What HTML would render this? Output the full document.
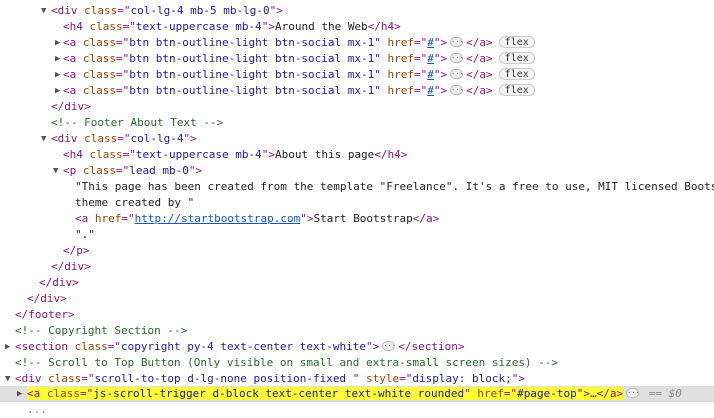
<!DOCTYPE html>
<html><head><style>
html,body{margin:0;padding:0;background:#fff;width:714px;height:405px;overflow:hidden}
body{font-family:"DejaVu Sans Mono","Liberation Mono",monospace;font-size:11px;color:#222}
.r{position:absolute;left:0;width:714px;height:16px;line-height:16px;white-space:pre;overflow:hidden;margin-top:1px}
.t{color:#881280}.n{color:#994500}.v{color:#1a1aa6}.c{color:#236e25}
.u{color:#1155cc;text-decoration:underline}
.tri{position:absolute;top:0;font-size:9px;color:#555}
.dots{display:inline-block;width:13px;height:10px;border:1px solid #bbb;border-radius:5px;background:#eee;vertical-align:middle;margin:0 3px;position:relative;top:-1px;font-size:7px;line-height:8px;text-align:center;color:#666;box-sizing:border-box}
.flex{display:inline-block;height:12px;line-height:11px;padding:0 5px;border:1px solid #ccc;border-radius:6px;background:#f3f3f3;font-size:10px;color:#333;margin-left:6px;vertical-align:middle;position:relative;top:-1px;box-sizing:border-box}
</style></head><body>
<div class="r" style="top:2px"><span class="tri" style="left:41px">▼</span><span style="position:absolute;left:51px"><span class="t">&lt;div</span> <span class="n">class</span><span class="t">="</span><span class="v">col-lg-4 mb-5 mb-lg-0</span><span class="t">"&gt;</span></span></div>
<div class="r" style="top:18px"><span style="position:absolute;left:63px"><span class="t">&lt;h4</span> <span class="n">class</span><span class="t">="</span><span class="v">text-uppercase mb-4</span><span class="t">"&gt;</span>Around the Web<span class="t">&lt;/h4&gt;</span></span></div>
<div class="r" style="top:34px"><span class="tri" style="left:55px">▶</span><span style="position:absolute;left:63px"><span class="t">&lt;a</span> <span class="n">class</span><span class="t">="</span><span class="v">btn btn-outline-light btn-social mx-1</span><span class="t">"</span> <span class="n">href</span><span class="t">="</span><span class="u">#</span><span class="t">"&gt;</span><span class="dots">···</span><span class="t">&lt;/a&gt;</span><span class="flex">flex</span></span></div>
<div class="r" style="top:50px"><span class="tri" style="left:55px">▶</span><span style="position:absolute;left:63px"><span class="t">&lt;a</span> <span class="n">class</span><span class="t">="</span><span class="v">btn btn-outline-light btn-social mx-1</span><span class="t">"</span> <span class="n">href</span><span class="t">="</span><span class="u">#</span><span class="t">"&gt;</span><span class="dots">···</span><span class="t">&lt;/a&gt;</span><span class="flex">flex</span></span></div>
<div class="r" style="top:66px"><span class="tri" style="left:55px">▶</span><span style="position:absolute;left:63px"><span class="t">&lt;a</span> <span class="n">class</span><span class="t">="</span><span class="v">btn btn-outline-light btn-social mx-1</span><span class="t">"</span> <span class="n">href</span><span class="t">="</span><span class="u">#</span><span class="t">"&gt;</span><span class="dots">···</span><span class="t">&lt;/a&gt;</span><span class="flex">flex</span></span></div>
<div class="r" style="top:82px"><span class="tri" style="left:55px">▶</span><span style="position:absolute;left:63px"><span class="t">&lt;a</span> <span class="n">class</span><span class="t">="</span><span class="v">btn btn-outline-light btn-social mx-1</span><span class="t">"</span> <span class="n">href</span><span class="t">="</span><span class="u">#</span><span class="t">"&gt;</span><span class="dots">···</span><span class="t">&lt;/a&gt;</span><span class="flex">flex</span></span></div>
<div class="r" style="top:98px"><span style="position:absolute;left:51px" class="t">&lt;/div&gt;</span></div>
<div class="r" style="top:114px"><span style="position:absolute;left:51px" class="c">&lt;!-- Footer About Text --&gt;</span></div>
<div class="r" style="top:130px"><span class="tri" style="left:41px">▼</span><span style="position:absolute;left:51px"><span class="t">&lt;div</span> <span class="n">class</span><span class="t">="</span><span class="v">col-lg-4</span><span class="t">"&gt;</span></span></div>
<div class="r" style="top:146px"><span style="position:absolute;left:63px"><span class="t">&lt;h4</span> <span class="n">class</span><span class="t">="</span><span class="v">text-uppercase mb-4</span><span class="t">"&gt;</span>About this page<span class="t">&lt;/h4&gt;</span></span></div>
<div class="r" style="top:162px"><span class="tri" style="left:53px">▼</span><span style="position:absolute;left:63px"><span class="t">&lt;p</span> <span class="n">class</span><span class="t">="</span><span class="v">lead mb-0</span><span class="t">"&gt;</span></span></div>
<div class="r" style="top:178px"><span style="position:absolute;left:75px">"This page has been created from the template "Freelance". It's a free to use, MIT licensed Bootstrap</span></div>
<div class="r" style="top:194px"><span style="position:absolute;left:75px">theme created by "</span></div>
<div class="r" style="top:210px"><span style="position:absolute;left:75px"><span class="t">&lt;a</span> <span class="n">href</span><span class="t">="</span><span class="u">http://startbootstrap.com</span><span class="t">"&gt;</span>Start Bootstrap<span class="t">&lt;/a&gt;</span></span></div>
<div class="r" style="top:226px"><span style="position:absolute;left:75px">"."</span></div>
<div class="r" style="top:242px"><span style="position:absolute;left:63px" class="t">&lt;/p&gt;</span></div>
<div class="r" style="top:258px"><span style="position:absolute;left:51px" class="t">&lt;/div&gt;</span></div>
<div class="r" style="top:274px"><span style="position:absolute;left:39px" class="t">&lt;/div&gt;</span></div>
<div class="r" style="top:290px"><span style="position:absolute;left:27px" class="t">&lt;/div&gt;</span></div>
<div class="r" style="top:306px"><span style="position:absolute;left:15px" class="t">&lt;/footer&gt;</span></div>
<div class="r" style="top:322px"><span style="position:absolute;left:15px" class="c">&lt;!-- Copyright Section --&gt;</span></div>
<div class="r" style="top:338px"><span class="tri" style="left:5px">▶</span><span style="position:absolute;left:15px"><span class="t">&lt;section</span> <span class="n">class</span><span class="t">="</span><span class="v">copyright py-4 text-center text-white</span><span class="t">"&gt;</span><span class="dots">···</span><span class="t">&lt;/section&gt;</span></span></div>
<div class="r" style="top:354px"><span style="position:absolute;left:15px" class="c">&lt;!-- Scroll to Top Button (Only visible on small and extra-small screen sizes) --&gt;</span></div>
<div class="r" style="top:370px"><span class="tri" style="left:5px">▼</span><span style="position:absolute;left:15px"><span class="t">&lt;div</span> <span class="n">class</span><span class="t">="</span><span class="v">scroll-to-top d-lg-none position-fixed </span><span class="t">"</span> <span class="n">style</span><span class="t">="</span><span class="v">display: block;</span><span class="t">"&gt;</span></span></div>
<div class="r" style="top:385px;background:#e0e0e0"><span class="tri" style="left:17px">▶</span><span style="position:absolute;left:27px"><span style="background:#ffff33"><span class="t">&lt;a</span> <span class="n">class</span><span class="t">="</span><span class="v">js-scroll-trigger d-block text-center text-white rounded</span><span class="t">"</span> <span class="n">href</span><span class="t">="</span><span class="v">#page-top</span><span class="t">"&gt;…&lt;/a&gt;</span></span><span class="dots">···</span> <span style="color:#888;font-style:italic">== $0</span></span></div>
<div class="r" style="top:401px"><span style="position:absolute;left:27px;color:#888">...</span></div>
</body></html>
